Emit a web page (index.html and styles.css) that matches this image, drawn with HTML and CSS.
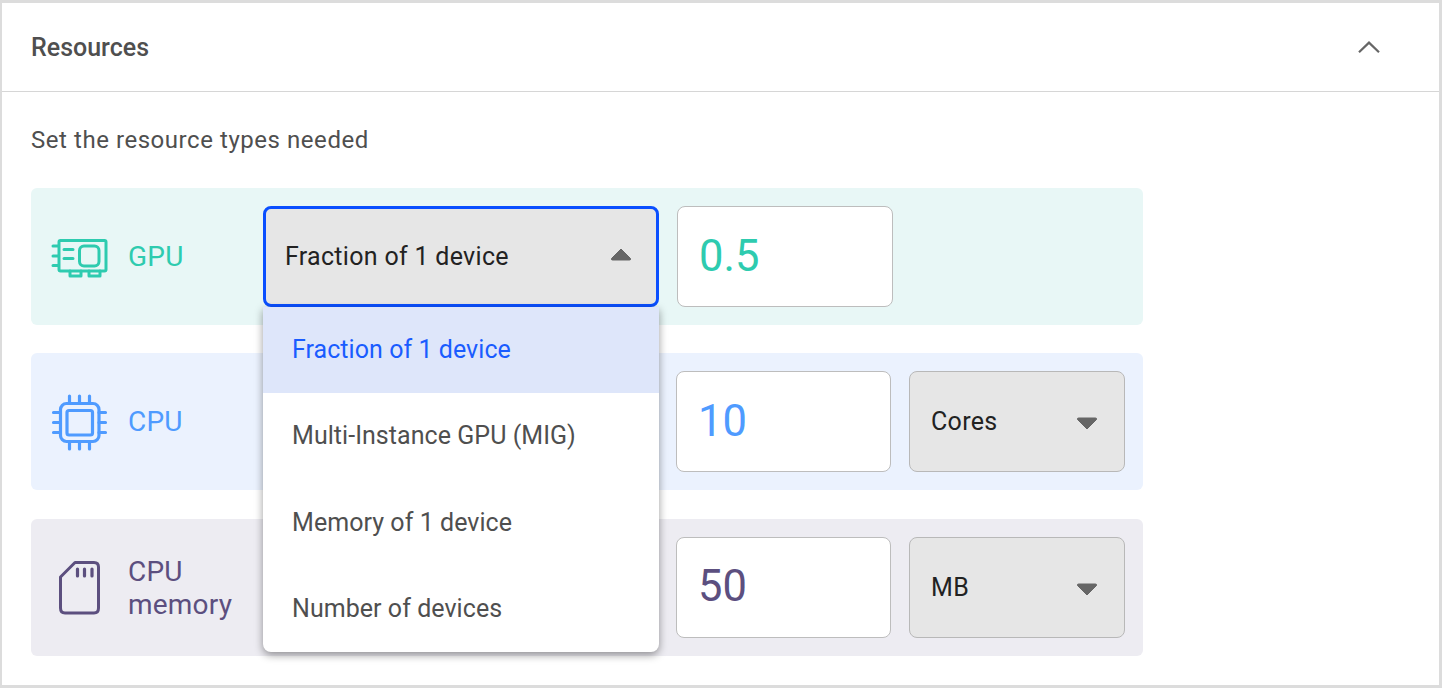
FILE: index.html
```html
<!DOCTYPE html>
<html lang="en">
<head>
<meta charset="utf-8">
<title>Resources</title>
<link rel="stylesheet" href="styles.css">
</head>
<body>
<section class="card">
  <header class="card-head">
    <h2 class="card-title">Resources</h2>
    <svg class="chevron" width="24" height="14" viewBox="0 0 24 14"><path d="M2 12.200 12 2.600l10 9.600" fill="none" stroke="#666" stroke-width="2.200"/></svg>
  </header>
  <div class="card-body">
    <p class="intro">Set the resource types needed</p>

    <div class="row row-gpu">
      <svg class="icon" width="60" height="60" viewBox="50 226 60 60" fill="none" stroke="#2ecbaf" stroke-width="3" stroke-linecap="round" stroke-linejoin="round">
        <rect x="59" y="239.500" width="47" height="30.500" rx="1.500"/>
        <rect x="79.500" y="245" width="19.500" height="20" rx="4.500"/>
        <path d="M53 245h5M53 255h5M53 264.500h5M64 248.500h9M64 257.500h9M70 270v5h11v-5M89 270v5h11v-5"/>
      </svg>
      <div class="label">GPU</div>
      <div class="select-wrap">
        <div class="select select-open">
          <span>Fraction of 1 device</span>
          <svg class="caret caret-up" width="22" height="14" viewBox="0 0 22 14"><path d="M11 2 20.500 11.500Q21 13 19.500 13H2.500Q1 13 1.500 11.500Z" fill="#666" stroke="#666" stroke-linejoin="round"/></svg>
        </div>
        <ul class="menu">
          <li class="menu-item menu-item-active">Fraction of 1 device</li>
          <li class="menu-item">Multi-Instance GPU (MIG)</li>
          <li class="menu-item">Memory of 1 device</li>
          <li class="menu-item">Number of devices</li>
        </ul>
      </div>
      <div class="field field-first">0.5</div>
    </div>

    <div class="row row-cpu">
      <svg class="icon" width="60" height="60" viewBox="50 391 60 60" fill="none" stroke="#4f9bff" stroke-width="3.200" stroke-linecap="round" stroke-linejoin="round">
        <rect x="60.500" y="402.500" width="38.500" height="38" rx="6"/>
        <rect x="67" y="409.500" width="25.500" height="24.500" rx="2"/>
        <path d="M69.500 395v7M79.500 395v7M89.500 395v7M69.500 441v7M79.500 441v7M89.500 441v7M53.500 411.500h7M53.500 421.500h7M53.500 431.500h7M99 411.500h6.500M99 421.500h6.500M99 431.500h6.500"/>
      </svg>
      <div class="label">CPU</div>
      <div class="select-wrap select-hidden"></div>
      <div class="field">10</div>
      <div class="select select-unit">
        <span>Cores</span>
        <svg class="caret caret-down" width="22" height="14" viewBox="0 0 22 14"><path d="M11 12 20.500 2.500Q21 1 19.500 1H2.500Q1 1 1.500 2.500Z" fill="#666" stroke="#666" stroke-linejoin="round"/></svg>
      </div>
    </div>

    <div class="row row-mem">
      <svg class="icon" width="60" height="60" viewBox="50 557 60 60" fill="none" stroke="#5c4f7f" stroke-width="3" stroke-linecap="round" stroke-linejoin="round">
        <path d="M60.500 577 75 562.500H94Q98.500 562.500 98.500 567V608Q98.500 613 94 613H65Q60.500 613 60.500 608Z"/>
        <path d="M77.500 569v7M84.500 569v7M92 569v7" stroke-width="3.200"/>
      </svg>
      <div class="label label-two">CPU<br>memory</div>
      <div class="select-wrap select-hidden"></div>
      <div class="field">50</div>
      <div class="select select-unit">
        <span>MB</span>
        <svg class="caret caret-down" width="22" height="14" viewBox="0 0 22 14"><path d="M11 12 20.500 2.500Q21 1 19.500 1H2.500Q1 1 1.500 2.500Z" fill="#666" stroke="#666" stroke-linejoin="round"/></svg>
      </div>
    </div>
  </div>
</section>
</body>
</html>
```

FILE: styles.css
```css
* { box-sizing: border-box; }
html, body { margin: 0; height: 100%; }
body {
  background: #dcdcdc;
  padding: 3px 3px 3px 2px;
  font-family: Roboto, "Liberation Sans", sans-serif;
  overflow: hidden;
}
.card {
  background: #fff;
  height: 682px;
}
.card-head {
  height: 89px;
  border-bottom: 1px solid #d6d6d6;
  display: flex;
  align-items: center;
  justify-content: space-between;
  padding: 0 58px 0 29px;
}
.card-title {
  margin: 0;
  font-size: 25px;
  font-weight: 500;
  color: #4f4f4f;
}
.chevron { display: block; margin-top: -1px; }
.card-body { padding: 32px 29px 0; }
.intro {
  margin: 0 0 32px;
  font-size: 24px;
  line-height: 32px;
  letter-spacing: 0.55px;
  color: #4f4f4f;
}
.row {
  width: 1112px;
  height: 137px;
  border-radius: 6px;
  display: flex;
  align-items: center;
  padding-left: 19px;
  margin-bottom: 28.400px;
}
.row-gpu { background: #e8f7f6; color: #2ecbaf; }
.row-cpu { background: #ebf2fe; color: #4f9bff; }
.row-mem { background: #edecf2; color: #5c4f7f; }
.icon { flex: none; display: block; }
.label {
  flex: none;
  width: 135px;
  margin-left: 18px;
  font-size: 28px;
  line-height: 33px;
  letter-spacing: 0.2px;
}
.label-two { padding-top: 2px; }
.select-wrap { position: relative; flex: none; width: 396px; margin-right: 18px; }
.select-hidden { width: 395px; }
.select {
  display: flex;
  align-items: center;
  justify-content: space-between;
  background: #e6e6e6;
  border: 1px solid #b8b8b8;
  border-radius: 8px;
  height: 101px;
  color: #222;
  font-size: 25px;
  letter-spacing: 0.3px;
}
.select-open {
  border: 3px solid #0a4fff;
  padding: 0 24px 1px 19px;
}
.select-unit {
  width: 216px;
  margin-left: 18px;
  padding: 0 26px 0 21px;
}
.caret { display: block; flex: none; }
.caret-up { margin-top: -5px; }
.caret-down { margin-top: 5px; }
.field {
  flex: none;
  width: 215px;
  height: 101px;
  background: #fff;
  border: 1px solid #bdbdbd;
  border-radius: 8px;
  display: flex;
  align-items: center;
  padding: 0 0 1px 21px;
  font-size: 43.500px;
}
.field-first { width: 216px; }
.menu {
  position: absolute;
  left: 0;
  top: 100%;
  width: 396px;
  height: 345px;
  margin: 0;
  padding: 0;
  list-style: none;
  background: #fff;
  border-radius: 0 0 8px 8px;
  overflow: hidden;
  box-shadow: 0 3px 8px rgba(0, 0, 0, 0.4);
  z-index: 2;
}
.menu-item {
  height: 86.250px;
  display: flex;
  align-items: center;
  padding: 0 0 1px 29px;
  font-size: 25px;
  letter-spacing: 0.05px;
  color: #4f4f4f;
}
.menu-item-active { background: #dee6fa; color: #1a5cff; }
```
